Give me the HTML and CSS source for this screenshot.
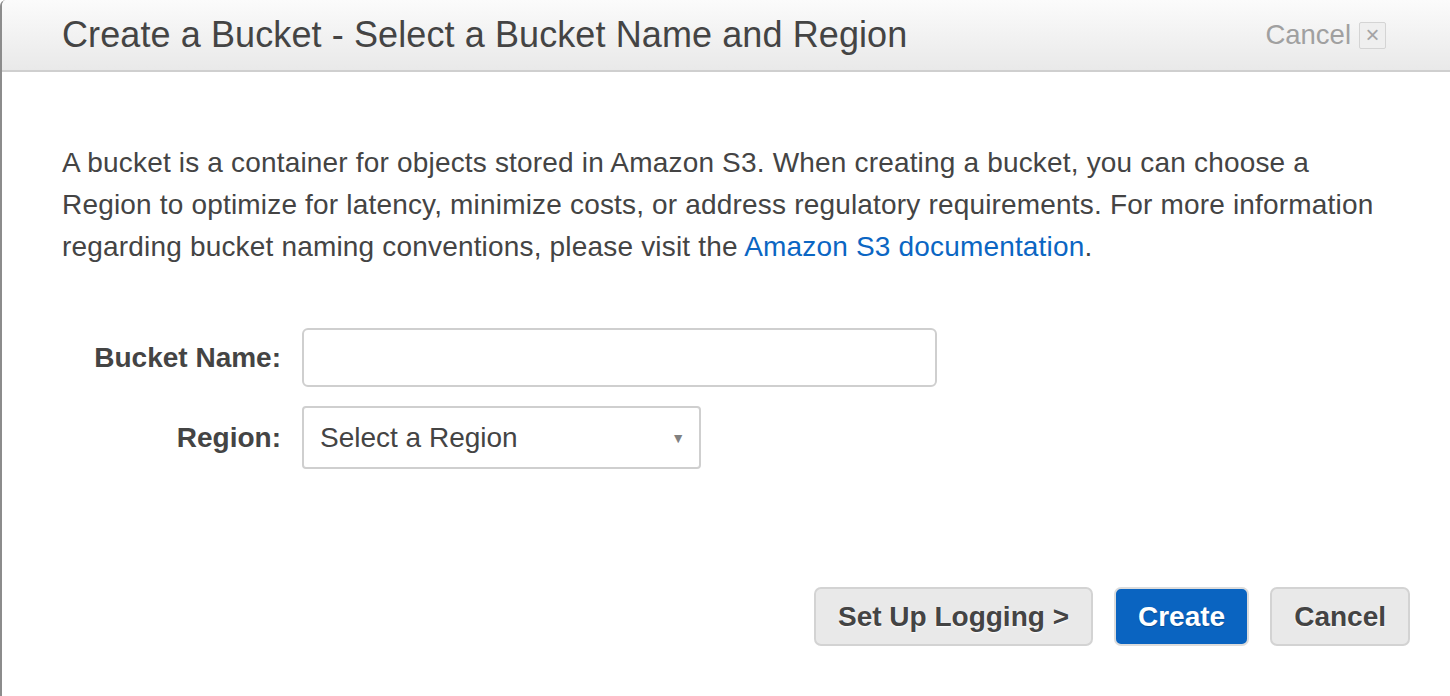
FILE: index.html
```html
<!DOCTYPE html>
<html>
<head>
<meta charset="utf-8">
<link rel="stylesheet" href="styles.css">
</head>
<body>
<div class="dialog">
  <div class="header">
    <h1 class="title">Create a Bucket - Select a Bucket Name and Region</h1>
    <div class="close">Cancel <span class="close-box">×</span></div>
  </div>
  <div class="content">
    <p class="intro">A bucket is a container for objects stored in Amazon S3. When creating a bucket, you can choose a Region to optimize for latency, minimize costs, or address regulatory requirements. For more information regarding bucket naming conventions, please visit the <a class="link" href="#">Amazon S3 documentation</a>.</p>
    <div class="form">
      <label class="label">Bucket Name:</label>
      <div class="input"></div>
      <label class="label">Region:</label>
      <div class="select"><span>Select a Region</span><span class="caret">▼</span></div>
    </div>
    <div class="actions">
      <button class="btn">Set Up Logging &gt;</button>
      <button class="btn btn-primary">Create</button>
      <button class="btn">Cancel</button>
    </div>
  </div>
</div>
</body>
</html>
```
FILE: styles.css
```css
html, body {
  margin: 0;
  padding: 0;
  background: #fff;
}
body {
  font-family: "Liberation Sans", Arial, Helvetica, sans-serif;
  color: #444;
}
.dialog {
  height: 696px;
  box-sizing: border-box;
  border-left: 2px solid #8c8c8c;
  border-top-left-radius: 6px;
  overflow: hidden;
}
.header {
  height: 72px;
  box-sizing: border-box;
  border-bottom: 2px solid #cfcfcf;
  background: linear-gradient(#fbfbfb, #e9e9e9);
  display: flex;
  align-items: center;
  justify-content: space-between;
  padding: 0 64px 0 60px;
}
.title {
  margin: 0;
  font-size: 36px;
  letter-spacing: 0.1px;
  font-weight: normal;
  color: #444;
}
.close {
  font-size: 27.5px;
  color: #a0a0a0;
  display: flex;
  align-items: center;
  gap: 8px;
}
.close-box {
  width: 27px;
  height: 27px;
  box-sizing: border-box;
  border: 1px solid #d4d4d4;
  border-radius: 2px;
  background: #efefef;
  font-size: 24px;
  line-height: 23px;
  text-align: center;
  color: #a4a4a4;
}
.content {
  padding: 0 40px 0 60px;
}
.intro {
  margin: 70px 20px 0 0;
  font-size: 28px;
  letter-spacing: 0.18px;
  line-height: 42px;
  color: #444;
}
.link {
  color: #0b66c3;
  text-decoration: none;
}
.form {
  display: grid;
  grid-template-columns: 219px auto;
  column-gap: 21px;
  row-gap: 19px;
  margin-top: 60px;
  align-items: center;
  justify-content: start;
}
.label {
  text-align: right;
  font-weight: bold;
  font-size: 28px;
  color: #444;
}
.input {
  width: 635px;
  height: 59px;
  box-sizing: border-box;
  border: 2px solid #cfcfcf;
  border-radius: 6px;
  background: #fff;
}
.select {
  width: 399px;
  height: 63px;
  box-sizing: border-box;
  border: 2px solid #cfcfcf;
  border-radius: 4px;
  display: flex;
  align-items: center;
  justify-content: space-between;
  padding: 0 14px 0 16px;
  font-size: 28px;
  color: #444;
}
.caret {
  font-size: 14px;
  color: #808080;
}
.actions {
  display: flex;
  justify-content: flex-end;
  gap: 21px;
  margin-top: 118px;
}
.btn {
  height: 59px;
  box-sizing: border-box;
  padding: 0 22px;
  border: 2px solid #d3d3d3;
  border-radius: 7px;
  background: #e9e9e9;
  font-family: "Liberation Sans", Arial, sans-serif;
  font-weight: bold;
  font-size: 28px;
  color: #444;
  text-shadow: 0 1px 2px #fff;
}
.btn-primary {
  background: #0a64c1;
  border-color: #dcdcdc;
  color: #fff;
  text-shadow: 0 1px 1px rgba(0,0,0,0.25);
}
```
